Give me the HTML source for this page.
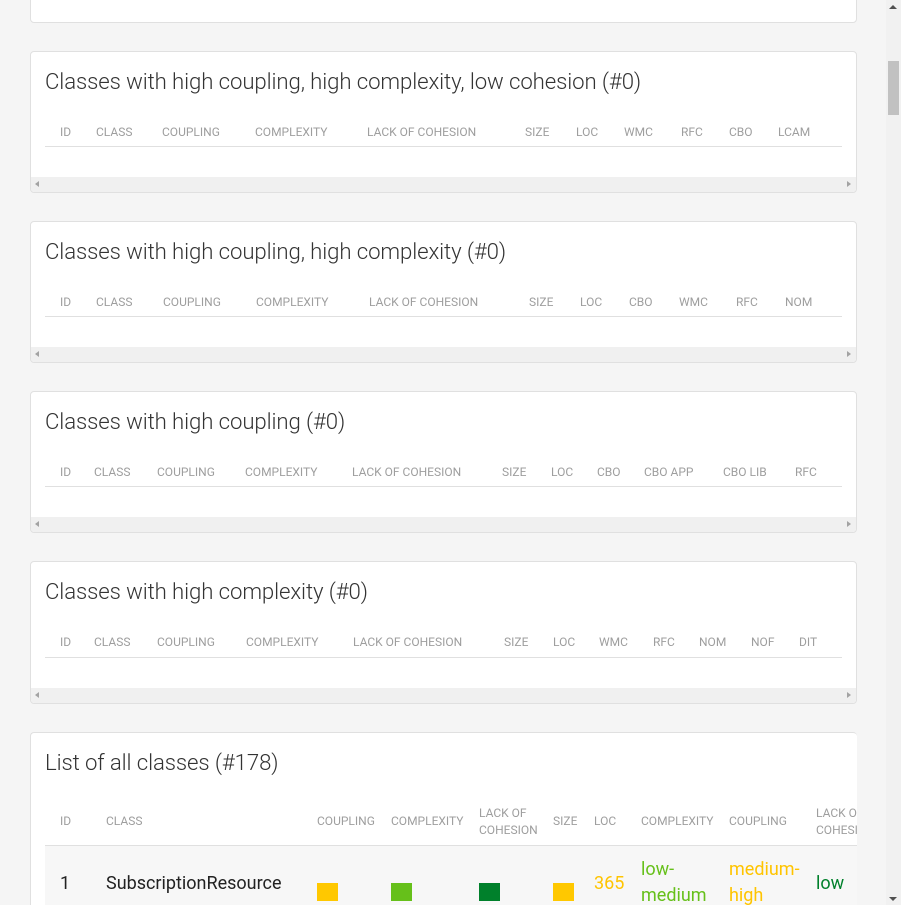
<!DOCTYPE html>
<html style="height:905px;overflow:hidden"><head><meta charset="utf-8"><style>
html,body{margin:0;padding:0;}
body{width:901px;height:905px;background:#f5f5f5;overflow:hidden;position:relative;font-family:"Roboto","Liberation Sans",sans-serif;}
.card{position:absolute;left:30px;width:825px;background:#fff;border:1px solid #e0e0e0;border-radius:4px;overflow:hidden;}
.t{position:absolute;left:14px;font-size:22.2px;font-weight:300;color:#333;white-space:nowrap;letter-spacing:-0.1px}
.h{position:absolute;font-size:12px;color:#9e9e9e;white-space:nowrap;}
.line{position:absolute;left:14px;width:797px;height:1px;background:#e0e0e0;}
.sb{position:absolute;left:0;right:0;bottom:0;height:15px;background:#f0f0f0;}
.sb:before{content:"";position:absolute;left:4px;top:4px;border-right:4px solid #a3a3a3;border-top:3.5px solid transparent;border-bottom:3.5px solid transparent;}
.sb:after{content:"";position:absolute;right:5px;top:4px;border-left:4px solid #a3a3a3;border-top:3.5px solid transparent;border-bottom:3.5px solid transparent;}
.sq{position:absolute;top:150px;width:21px;height:18px;}
.d{position:absolute;font-size:18px;line-height:26px;}
</style></head><body>
<div class="card" style="top:-10px;height:31px;"></div>

<div class="card" style="top:51px;height:140px;">
<div class="t" style="top:17px">Classes with high coupling, high complexity, low cohesion (#0)</div>
<div class="h" style="top:73px;left:29px">ID</div><div class="h" style="top:73px;left:65px">CLASS</div><div class="h" style="top:73px;left:131px">COUPLING</div><div class="h" style="top:73px;left:224px">COMPLEXITY</div><div class="h" style="top:73px;left:336px">LACK OF COHESION</div><div class="h" style="top:73px;left:494px">SIZE</div><div class="h" style="top:73px;left:545px">LOC</div><div class="h" style="top:73px;left:593px">WMC</div><div class="h" style="top:73px;left:650px">RFC</div><div class="h" style="top:73px;left:698px">CBO</div><div class="h" style="top:73px;left:747px">LCAM</div>
<div class="line" style="top:94px"></div><div class="sb"></div></div>

<div class="card" style="top:221px;height:140px;">
<div class="t" style="top:17px">Classes with high coupling, high complexity (#0)</div>
<div class="h" style="top:73px;left:29px">ID</div><div class="h" style="top:73px;left:65px">CLASS</div><div class="h" style="top:73px;left:132px">COUPLING</div><div class="h" style="top:73px;left:225px">COMPLEXITY</div><div class="h" style="top:73px;left:338px">LACK OF COHESION</div><div class="h" style="top:73px;left:498px">SIZE</div><div class="h" style="top:73px;left:549px">LOC</div><div class="h" style="top:73px;left:598px">CBO</div><div class="h" style="top:73px;left:648px">WMC</div><div class="h" style="top:73px;left:705px">RFC</div><div class="h" style="top:73px;left:754px">NOM</div>
<div class="line" style="top:94px"></div><div class="sb"></div></div>

<div class="card" style="top:391px;height:140px;">
<div class="t" style="top:17px">Classes with high coupling (#0)</div>
<div class="h" style="top:73px;left:29px">ID</div><div class="h" style="top:73px;left:63px">CLASS</div><div class="h" style="top:73px;left:126px">COUPLING</div><div class="h" style="top:73px;left:214px">COMPLEXITY</div><div class="h" style="top:73px;left:321px">LACK OF COHESION</div><div class="h" style="top:73px;left:471px">SIZE</div><div class="h" style="top:73px;left:520px">LOC</div><div class="h" style="top:73px;left:566px">CBO</div><div class="h" style="top:73px;left:613px">CBO APP</div><div class="h" style="top:73px;left:692px">CBO LIB</div><div class="h" style="top:73px;left:764px">RFC</div>
<div class="line" style="top:94px"></div><div class="sb"></div></div>

<div class="card" style="top:561px;height:141px;">
<div class="t" style="top:17px">Classes with high complexity (#0)</div>
<div class="h" style="top:73px;left:29px">ID</div><div class="h" style="top:73px;left:63px">CLASS</div><div class="h" style="top:73px;left:126px">COUPLING</div><div class="h" style="top:73px;left:215px">COMPLEXITY</div><div class="h" style="top:73px;left:322px">LACK OF COHESION</div><div class="h" style="top:73px;left:473px">SIZE</div><div class="h" style="top:73px;left:522px">LOC</div><div class="h" style="top:73px;left:568px">WMC</div><div class="h" style="top:73px;left:622px">RFC</div><div class="h" style="top:73px;left:668px">NOM</div><div class="h" style="top:73px;left:720px">NOF</div><div class="h" style="top:73px;left:768px">DIT</div>
<div class="line" style="top:95px"></div><div class="sb"></div></div>

<div class="card" style="top:732px;height:200px;width:826px;border-right:none;">
<div class="t" style="top:17px">List of all classes (#178)</div>
<div class="h" style="top:81px;left:29px">ID</div><div class="h" style="top:81px;left:75px">CLASS</div><div class="h" style="top:81px;left:286px">COUPLING</div><div class="h" style="top:81px;left:360px">COMPLEXITY</div><div class="h" style="top:72px;left:448px;line-height:17px">LACK OF<br>COHESION</div><div class="h" style="top:81px;left:522px">SIZE</div><div class="h" style="top:81px;left:563px">LOC</div><div class="h" style="top:81px;left:610px">COMPLEXITY</div><div class="h" style="top:81px;left:698px">COUPLING</div><div class="h" style="top:72px;left:785px;line-height:17px">LACK OF<br>COHESION</div>
<div style="position:absolute;left:14px;right:0;top:112px;height:1px;background:#e0e0e0"></div>
<div style="position:absolute;left:14px;right:0;top:113px;height:100px;background:#f7f7f7"></div>
<div class="d" style="left:29px;top:138px;color:#222">1</div>
<div class="d" style="left:75px;top:138px;color:#222">SubscriptionResource</div>
<div class="sq" style="left:286px;background:#ffc800"></div>
<div class="sq" style="left:360px;background:#66c01a"></div>
<div class="sq" style="left:448px;background:#00802b"></div>
<div class="sq" style="left:522px;background:#ffc800"></div>
<div class="d" style="left:563px;top:138px;color:#ffc400">365</div>
<div class="d" style="left:610px;top:124px;color:#66c01a">low-<br>medium</div>
<div class="d" style="left:698px;top:124px;color:#ffc400">medium-<br>high</div>
<div class="d" style="left:785px;top:138px;color:#00802b">low</div>
</div>

<div style="position:absolute;left:886px;top:0;width:15px;height:905px;background:#f1f1f1"></div>
<div style="position:absolute;left:889px;top:5px;border-bottom:4px solid #505050;border-left:4px solid transparent;border-right:4px solid transparent"></div>
<div style="position:absolute;left:888px;top:61px;width:11px;height:54px;background:#c1c1c1"></div>
<div style="position:absolute;left:889px;top:897px;border-top:4px solid #505050;border-left:4px solid transparent;border-right:4px solid transparent"></div>
</body></html>
